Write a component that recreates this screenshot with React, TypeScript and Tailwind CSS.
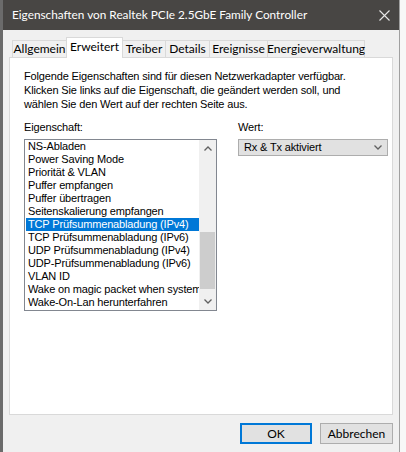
import { ReactNode } from 'react'

const ITEMS = [
  'NS-Abladen',
  'Power Saving Mode',
  'Priorität & VLAN',
  'Puffer empfangen',
  'Puffer übertragen',
  'Seitenskalierung empfangen',
  'TCP Prüfsummenabladung (IPv4)',
  'TCP Prüfsummenabladung (IPv6)',
  'UDP Prüfsummenabladung (IPv4)',
  'UDP-Prüfsummenabladung (IPv6)',
  'VLAN ID',
  'Wake on magic packet when system',
  'Wake-On-Lan herunterfahren',
]

const TABS = [
  { label: 'Allgemein', w: 'w-[55px]' },
  { label: 'Erweitert', w: 'w-[57px]', active: true },
  { label: 'Treiber', w: 'w-[44px]' },
  { label: 'Details', w: 'w-[45px]' },
  { label: 'Ereignisse', w: 'w-[59px]' },
  { label: 'Energieverwaltung', w: 'w-[98px]' },
]

const uiFont = { fontFamily: 'Lato, "Noto Sans", sans-serif' }
const dlgFont = { fontFamily: '"Liberation Sans", Arial, sans-serif' }

function Chevron({ up = false, className = '' }: { up?: boolean; className?: string }) {
  return (
    <svg width="8" height="5" viewBox="0 0 8 5" className={className}>
      <path d={up ? 'M0.5 4.5 L4 1 L7.5 4.5' : 'M0.5 0.5 L4 4 L7.5 0.5'} fill="none" stroke="#606060" strokeWidth="1.3" />
    </svg>
  )
}

function Button({ children, primary = false }: { children: ReactNode; primary?: boolean }) {
  return (
    <div
      className={`h-[21px] flex items-center justify-center bg-[#e1e1e1] text-[12px] text-black ${
        primary ? 'w-[72px] border-2 border-[#0078d7]' : 'w-[73px] border border-[#adadad]'
      }`}
      style={uiFont}
    >
      {children}
    </div>
  )
}

export default function App() {
  return (
    <div className="w-[406px] h-[452px] flex bg-white overflow-hidden">
      {/* window */}
      <div className="w-[400px] h-full flex flex-col border-l-[3px] border-[#6b6b6b] border-r border-r-[#a0a0a0]">
        {/* title bar */}
        <div className="h-[30px] bg-[#484644] flex items-center justify-between pl-[9px] pr-[9px] shrink-0">
          <span className="text-white text-[11.8px]" style={uiFont}>
            Eigenschaften von Realtek PCIe 2.5GbE Family Controller
          </span>
          <svg width="11" height="11" viewBox="0 0 11 11">
            <path d="M0.5 0.5 L10.5 10.5 M10.5 0.5 L0.5 10.5" stroke="#e8e8e8" strokeWidth="1.1" />
          </svg>
        </div>

        {/* body */}
        <div className="flex-1 bg-[#f0f0f0] flex flex-col pl-[6px] pr-[6px] pt-[8px]">
          {/* tabs */}
          <div className="flex items-end pl-[3px] h-[19px] relative z-10">
            {TABS.map(t => (
              <div
                key={t.label}
                className={`${t.w} -ml-px first:ml-0 flex items-center justify-center text-[12px] text-black border-t border-x ${
                  t.active
                    ? 'h-[21px] bg-white border-[#d9d9d9] pb-[3px] relative z-10 -mb-px'
                    : 'h-[17px] bg-[#f0f0f0] border-[#d9d9d9]'
                }`}
                style={uiFont}
              >
                {t.label}
              </div>
            ))}
          </div>

          {/* panel */}
          <div className="h-[358px] bg-white border border-[#d9d9d9] pt-[11px] pl-[14px] pr-[4px]" style={dlgFont}>
            <p className="text-[11px] leading-[14px] tracking-[-0.15px] text-black">
              Folgende Eigenschaften sind für diesen Netzwerkadapter verfügbar.
              <br />
              Klicken Sie links auf die Eigenschaft, die geändert werden soll, und
              <br />
              wählen Sie den Wert auf der rechten Seite aus.
            </p>

            <div className="flex mt-[9px] tracking-[-0.15px]">
              <div className="w-[193px]">
                <div className="text-[11px] leading-[14px] text-black mb-[5px]">Eigenschaft:</div>
                <div className="h-[172px] border border-[#828790] flex">
                  <div className="flex-1 flex flex-col pl-px overflow-hidden">
                    {ITEMS.map((item, i) => (
                      <div
                        key={item}
                        className={`h-[13px] leading-[13px] text-[11px] whitespace-nowrap pl-[2px] ${
                          i === 6 ? 'bg-[#0078d7] text-white' : 'text-black'
                        }`}
                      >
                        {item}
                      </div>
                    ))}
                  </div>
                  {/* scrollbar */}
                  <div className="w-[17px] bg-[#f0f0f0] flex flex-col">
                    <div className="h-[17px] flex items-center justify-center">
                      <Chevron up />
                    </div>
                    <div className="flex-1 flex flex-col">
                      <div className="h-[75px]" />
                      <div className="h-[57px] mx-px bg-[#cdcdcd]" />
                    </div>
                    <div className="h-[17px] flex items-center justify-center">
                      <Chevron />
                    </div>
                  </div>
                </div>
              </div>

              <div className="ml-[21px] w-[151px]">
                <div className="text-[11px] leading-[14px] text-black mb-[5px]">Wert:</div>
                <div className="h-[17px] bg-[#e1e1e1] border border-[#adadad] flex items-center justify-between pl-[5px] pr-[5px]">
                  <span className="text-[11px] text-black">Rx &amp; Tx aktiviert</span>
                  <Chevron />
                </div>
              </div>
            </div>
          </div>

          {/* buttons */}
          <div className="flex justify-end gap-[8px] mt-[8px]">
            <Button primary>OK</Button>
            <Button>Abbrechen</Button>
          </div>
        </div>
      </div>

      {/* what lies behind the window */}
      <div className="flex-1 bg-[#f7f7f7]" />
    </div>
  )
}
